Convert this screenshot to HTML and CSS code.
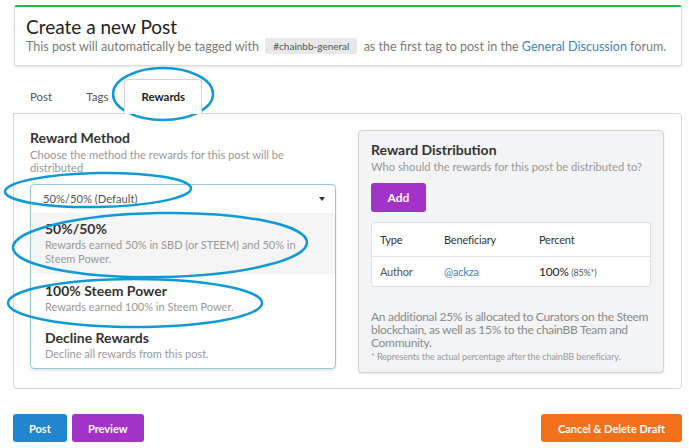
FILE: index.html
```html
<!DOCTYPE html>
<html>
    <head>
        <title>Create a new Post</title>
        <link rel="stylesheet" href="styles.css">
    </head>
    <body>
        <div class="page">
            <div class="head">
                <h1>Create a new Post</h1>
                <p>This post will automatically be tagged with <span class="chip">#chainbb-general</span> as the first tag to post in the <a href="#">General Discussion</a> forum.</p>
            </div>

            <div class="tabs">
                <div class="tab">Post</div>
                <div class="tab">Tags</div>
                <div class="tab active">Rewards</div>
            </div>

            <div class="panel">
                <div class="col">
                    <h3>Reward Method</h3>
                    <p class="sub">Choose the method the rewards for this post will be distributed</p>
                    <div class="dropdown">
                        <div class="selected">50%/50% (Default) <span class="caret"></span></div>
                        <div class="menu">
                            <div class="item hover">
                                <div class="item-title">50%/50%</div>
                                <div class="item-desc">Rewards earned 50% in SBD (or STEEM) and 50% in Steem Power.</div>
                            </div>
                            <div class="item">
                                <div class="item-title">100% Steem Power</div>
                                <div class="item-desc">Rewards earned 100% in Steem Power.</div>
                            </div>
                            <div class="item">
                                <div class="item-title">Decline Rewards</div>
                                <div class="item-desc">Decline all rewards from this post.</div>
                            </div>
                        </div>
                    </div>
                </div>

                <div class="col">
                    <div class="dist">
                        <h3>Reward Distribution</h3>
                        <p class="sub">Who should the rewards for this post be distributed to?</p>
                        <button class="btn purple add">Add</button>
                        <table>
                            <tr><th>Type</th><th>Beneficiary</th><th>Percent</th></tr>
                            <tr><td>Author</td><td><a href="#">@ackza</a></td><td><span class="pct">100%</span> <small>(85%*)</small></td></tr>
                        </table>
                        <p class="note">An additional 25% is allocated to Curators on the Steem blockchain, as well as 15% to the chainBB Team and Community.</p>
                        <p class="foot">* Represents the actual percentage after the chainBB beneficiary.</p>
                    </div>
                </div>
            </div>

            <div class="actions">
                <div>
                    <button class="btn blue">Post</button>
                    <button class="btn purple preview">Preview</button>
                </div>
                <button class="btn orange cancel">Cancel &amp; Delete Draft</button>
            </div>
        </div>

        <!-- hand drawn marks over the screenshot -->
        <svg class="marks" width="689" height="448" viewBox="0 0 689 448">
            <g fill="none" stroke="#0e9ad7" stroke-width="2.5">
                <ellipse cx="163" cy="94" rx="50" ry="26"/>
                <ellipse cx="98" cy="190" rx="93" ry="17" transform="rotate(-1 98 190)"/>
                <ellipse cx="160" cy="245" rx="147" ry="32" transform="rotate(-1 160 245)"/>
                <ellipse cx="135" cy="303" rx="127" ry="24"/>
            </g>
        </svg>
    </body>
</html>
```

FILE: styles.css
```css
body { margin: 0; font-family: Lato, "Liberation Sans", sans-serif; color: #333; background: #fff; position: relative; }
a { color: #4183c4; text-decoration: none; }
.page { padding: 5px 7px 0 13px; }
.head { margin-left: 1px; border: 1px solid #dcdcdd; border-top: 2px solid #21ba45; border-radius: 3px; box-shadow: 0 1px 3px rgba(0,0,0,.12); padding: 9px 11px 9px; }
.head h1 { font-size: 19px; font-weight: 400; margin: 0; line-height: 22px; color: #222; }
.head p { margin: 0; font-size: 12.55px; color: #7a7a7a; line-height: 18px; white-space: nowrap; }
.chip { display: inline-block; background: #e8e8e8; color: #555; font-size: 10px; line-height: 16px; padding: 0 8px; border-radius: 2px; margin: 0 3px; vertical-align: 1px; }
.tabs { display: flex; margin-top: 13px; position: relative; z-index: 1; }
.tab { padding: 0 16px; height: 33px; line-height: 33px; font-size: 11.5px; color: #555; border: 1px solid transparent; border-bottom: none; border-radius: 4px 4px 0 0; }
.tab.active { border-color: #d4d4d5; background: #fff; font-weight: 700; color: #222; height: 34px; margin-bottom: -1px; margin-left: -1px; }
.panel { border: 1px solid #d4d4d5; border-radius: 0 4px 4px 4px; padding: 14px 17px 15px 16px; display: grid; grid-template-columns: 1fr 1fr; gap: 22px; align-items: start; }
h3 { margin: 0; font-size: 14px; font-weight: 700; color: #333; line-height: 20px; }
.sub { margin: 0; font-size: 11.2px; color: #999; line-height: 13px; }
.dropdown { margin-top: 10px; border: 1px solid #96c8da; border-radius: 4px; box-shadow: 0 2px 3px rgba(0,0,0,.1); background: #fff; }
.selected { padding: 0 12px; height: 28px; line-height: 28px; font-size: 11.2px; color: #555; position: relative; }
.caret { position: absolute; right: 10px; top: 12px; border: 3px solid transparent; border-top: 4px solid #333; }
.item { padding: 8px 14px 7px; }
.item.hover { background: #f5f5f5; padding-top: 7px; padding-bottom: 8px; }
.item-title { font-size: 14px; font-weight: 700; color: #333; line-height: 18px; }
.item-desc { font-size: 11px; color: #999; line-height: 14px; }
.dist { background: #f3f4f5; border: 1px solid #d4d4d5; border-radius: 4px; box-shadow: 0 1px 2px rgba(0,0,0,.1); padding: 9px 12px 9px; margin-top: 2px; }
.btn { border: none; border-radius: 3px; color: #fff; font-family: Lato, "Liberation Sans", sans-serif; font-weight: 700; font-size: 11px; height: 28px; padding: 0 16px; cursor: pointer; }
.purple { background: #a333c8; }
.blue { background: #2185d0; }
.orange { background: #f2711c; }
.add { margin-top: 10px; width: 55px; height: 29px; font-size: 12px; }
table { margin-top: 10px; width: 100%; background: #fff; border: 1px solid #dedfe0; border-radius: 4px; border-collapse: separate; border-spacing: 0; font-size: 11px; letter-spacing: -0.2px; }
th { text-align: left; font-weight: 400; color: #333; height: 33px; padding: 0 8px; border-bottom: 1px solid #e4e4e4; }
td { height: 29px; padding: 0 8px; color: #555; }
th:nth-child(1) { width: 48px; }
th:nth-child(2) { width: 79px; }
.pct { color: #222; font-size: 12px; }
small { font-size: 9px; color: #555; }
.note { margin: 23px 0 0; font-size: 12px; line-height: 13px; color: #8a8a8a; letter-spacing: -0.3px; }
.foot { margin: 2px 0 0; font-size: 9px; color: #999; line-height: 12px; letter-spacing: -0.1px; }
.actions { display: flex; justify-content: space-between; margin-top: 25px; }
.actions .preview { margin-left: 1px; }
.actions .cancel { padding: 0 17px; }
.marks { position: absolute; left: 0; top: 0; pointer-events: none; }
```
